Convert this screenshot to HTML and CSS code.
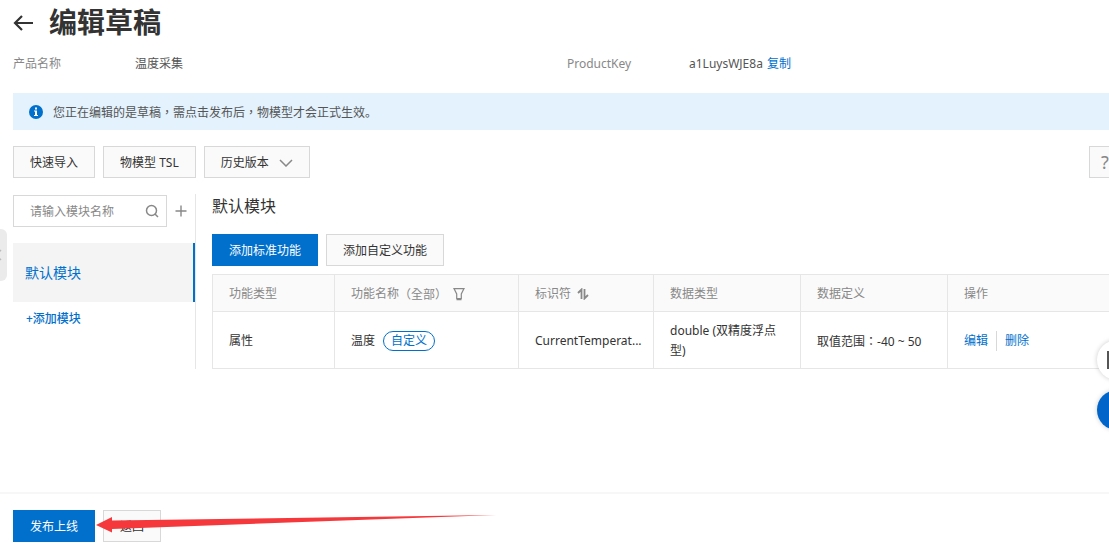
FILE: index.html
```html
<!DOCTYPE html>
<html lang="zh-CN">
<head>
<meta charset="utf-8">
<title>编辑草稿</title>
<link rel="stylesheet" href="styles.css">
</head>
<body>
<div class="app">
  <main class="content">
    <header class="page-head">
      <button class="icon-btn" type="button" aria-label="返回上一页">
        <svg width="22" height="18" viewBox="0 0 22 18" fill="none" stroke="#333" stroke-width="2.200"><path d="M20 10H2M9 3L2 10l7 7"/></svg>
      </button>
      <h1 class="page-title">编辑草稿</h1>
    </header>

    <dl class="facts">
      <div class="fact"><dt>产品名称</dt><dd>温度采集</dd></div>
      <div class="fact"><dt>ProductKey</dt><dd>a1LuysWJE8a<a class="link copy" href="#copy">复制</a></dd></div>
    </dl>

    <div class="notice" role="status">
      <svg width="14" height="14" viewBox="0 0 14 14"><circle cx="7" cy="7" r="7" fill="#0070cc"/><path d="M6 2.500h2v2H6zM5 5.500h3v4.500h1v1H5v-1h1V6.500H5z" fill="#fff"/></svg>
      <span>您正在编辑的是草稿<span class="trad" lang="zh-Hant">，</span>需点击发布后<span class="trad" lang="zh-Hant">，</span>物模型才会正式生效。</span>
    </div>

    <div class="toolbar">
      <button class="btn" type="button">快速导入</button>
      <button class="btn" type="button">物模型 TSL</button>
      <button class="btn" type="button">历史版本
        <svg class="chevron" width="14" height="8" viewBox="0 0 14 8" fill="none" stroke="#888" stroke-width="1.500"><path d="M1 1l6 6 6-6"/></svg>
      </button>
      <button class="btn help" type="button" aria-label="帮助">?</button>
    </div>

    <div class="workspace">
      <aside class="modules">
        <div class="search-row">
          <div class="search">
            <input class="search-input" type="text" aria-label="请输入模块名称" placeholder="请输入模块名称">
            <svg width="14" height="14" viewBox="0 0 14 14" fill="none" stroke="#888" stroke-width="1.500"><circle cx="6.500" cy="6.500" r="5"/><path d="M10 10l3 3"/></svg>
          </div>
          <button class="icon-btn" type="button" aria-label="新增">
            <svg width="12" height="12" viewBox="0 0 12 12" fill="none" stroke="#888" stroke-width="1.400"><path d="M6 .5v11M.5 6h11"/></svg>
          </button>
        </div>
        <button class="module active" type="button">默认模块</button>
        <button class="add-module" type="button">+添加模块</button>
      </aside>

      <section class="detail">
        <h2 class="section-title">默认模块</h2>
        <div class="actions">
          <button class="btn primary" type="button">添加标准功能</button>
          <button class="btn" type="button">添加自定义功能</button>
        </div>
        <table class="features">
          <colgroup><col class="c-type"><col class="c-name"><col class="c-id"><col class="c-data"><col class="c-data"><col></colgroup>
          <thead>
            <tr>
              <th>功能类型</th>
              <th><span class="th-label">功能名称<span class="trad" lang="zh-Hant">（全部）</span>
                <svg width="12" height="14" viewBox="0 0 12 14" fill="none" stroke="#888" stroke-width="1.200"><path d="M1 1.600h10L8.300 7v4.500H3.700V7zM3.500 12.600h5"/></svg></span></th>
              <th><span class="th-label">标识符
                <svg width="12" height="12" viewBox="0 0 12 12" fill="none" stroke="#888" stroke-width="1.800"><path d="M4.500 11V1.500L1 5M7.500 1v9.500L11 7"/></svg></span></th>
              <th>数据类型</th>
              <th>数据定义</th>
              <th>操作</th>
            </tr>
          </thead>
          <tbody>
            <tr>
              <td>属性</td>
              <td>温度<span class="tag">自定义</span></td>
              <td class="identifier">CurrentTemperat...</td>
              <td>double (双精度浮点型)</td>
              <td>取值范围<span class="trad" lang="zh-Hant">：</span>-40 ~ 50</td>
              <td><span class="row-links"><a class="link" href="#edit">编辑</a><a class="link" href="#delete">删除</a></span></td>
            </tr>
          </tbody>
        </table>
      </section>
    </div>
  </main>

  <footer class="footer">
    <button class="btn primary" type="button">发布上线</button>
    <button class="btn" type="button">返回</button>
    <svg class="pointer" width="400" height="18" viewBox="0 0 400 18" fill="#f5383b"><path d="M0 10L16 2v3.500L400 0 16 14v3.500z"/></svg>
  </footer>

  <button class="collapse" type="button" aria-label="展开菜单">
    <svg width="6" height="12" viewBox="0 0 6 12" fill="none" stroke="#bbb" stroke-width="1.500"><path d="M1 1L-4 6l5 5"/></svg>
  </button>
  <div class="floaters">
    <button class="float" type="button" aria-label="文档">
      <svg width="16" height="18" viewBox="0 0 16 18" fill="none" stroke="#555" stroke-width="2"><path d="M1 1h14v16H1z"/></svg>
    </button>
    <button class="float solid" type="button" aria-label="咨询"></button>
  </div>
</div>
</body>
</html>
```
FILE: styles.css
```css
* { box-sizing: border-box; }

body {
  margin: 0;
  background: #fff;
  color: #333;
  font: 12px/20px "Noto Sans", "Noto Sans CJK SC", sans-serif;
}

button, input { font: inherit; color: inherit; }
button { cursor: pointer; }
svg { display: block; flex: none; }

.app {
  position: relative;
  display: flex;
  flex-direction: column;
  min-height: 100vh;
  overflow: hidden;
}

.content { flex: 1; margin-right: -12px; padding-left: 13px; }

.icon-btn { padding: 0; border: 0; background: none; }

.page-head {
  display: flex;
  align-items: center;
  gap: 14px;
  height: 44px;
}
.page-title { margin: 0; font-size: 28px; line-height: 40px; }

.facts {
  display: grid;
  grid-template-columns: 1fr 1fr;
  margin: 10px 0 19px;
}
.fact { display: flex; }
.fact dt { width: 122px; color: #888; }
.fact dd { margin: 0; color: #555; }
.copy { margin-left: 4px; }

.link { color: #0070cc; text-decoration: none; }

.notice {
  display: flex;
  align-items: center;
  gap: 10px;
  height: 37px;
  padding: 1px 0 0 16px;
  background: #e3f2fd;
  color: #555;
}

.toolbar, .actions { display: flex; gap: 8px; }
.toolbar { margin-top: 16px; }

.btn {
  display: inline-flex;
  align-items: center;
  justify-content: center;
  height: 32px;
  padding: 2px 16px 0;
  border: 1px solid #d8d8d8;
  background: #fafafa;
  white-space: nowrap;
}
.btn.primary { border-color: #0070cc; background: #0070cc; color: #fff; }
.chevron { margin-left: 10px; }
.help {
  width: 32px;
  margin-left: auto;
  padding: 0;
  color: #888;
  font-size: 18px;
}

.workspace { display: flex; margin-top: 16px; }

.modules {
  display: flex;
  flex-direction: column;
  flex: none;
  width: 183px;
  padding-top: 1px;
  border-right: 1px solid #e6e6e6;
}
.search-row { display: flex; align-items: center; gap: 8px; }
.search {
  display: flex;
  align-items: center;
  width: 154px;
  height: 32px;
  padding: 0 7px 0 16px;
  border: 1px solid #d8d8d8;
}
.search-input {
  flex: 1;
  min-width: 0;
  padding: 1px 0 0;
  border: 0;
  outline: 0;
  background: none;
}
.search-input::placeholder { color: #888; opacity: 1; }

.module {
  height: 59px;
  margin-top: 16px;
  padding: 0 12px;
  border: 0;
  border-right: 2px solid #0070cc;
  background: #f4f4f4;
  color: #0070cc;
  font-size: 14px;
  text-align: left;
}
.add-module {
  align-self: flex-start;
  margin-top: 7px;
  padding: 0 13px;
  border: 0;
  background: none;
  color: #0070cc;
  font-weight: 500;
}

.detail { flex: 1; min-width: 0; padding-left: 16px; }
.section-title {
  margin: 0 0 16px;
  font-size: 16px;
  font-weight: 400;
  line-height: 24px;
}

.features {
  width: 100%;
  margin-top: 8px;
  border-collapse: collapse;
  table-layout: fixed;
}
.c-type { width: 122px; }
.c-name { width: 184px; }
.c-id { width: 135px; }
.c-data { width: 147px; }
.features th, .features td {
  padding: 9px 16px 7px;
  border: 1px solid #e6e6e6;
  text-align: left;
}
.features th { background: #fafafa; color: #888; font-weight: 400; }
.features .identifier { padding-right: 8px; white-space: nowrap; }
.th-label { display: flex; align-items: center; gap: 6px; }
.th-label .trad { margin-left: -6px; }
.trad { font-family: "Noto Sans CJK TC", sans-serif; }

.tag {
  display: inline-block;
  margin-left: 8px;
  padding: 0 7px;
  border: 1px solid #0070cc;
  border-radius: 10px;
  color: #0070cc;
  line-height: 18px;
}
.row-links { display: flex; }
.row-links .link + .link {
  margin-left: 8px;
  padding-left: 8px;
  border-left: 1px solid #d8d8d8;
}

.footer {
  position: relative;
  display: flex;
  gap: 8px;
  padding: 16px 13px 12px;
  border-top: 2px solid #f7f7f7;
}
.pointer { position: absolute; left: 96px; top: 21px; }

.collapse {
  position: absolute;
  left: 0;
  top: 229px;
  width: 7px;
  height: 52px;
  padding: 0;
  border: 0;
  border-radius: 0 6px 6px 0;
  background: #ebebeb;
}

.floaters {
  position: absolute;
  right: -28px;
  top: 340px;
  display: flex;
  flex-direction: column;
  gap: 10px;
}
.float {
  display: flex;
  align-items: center;
  width: 40px;
  height: 40px;
  padding: 0 10px;
  border: 0;
  border-radius: 50%;
  background: #fff;
  box-shadow: 0 0 5px rgba(0, 0, 0, 0.2);
}
.float.solid { background: #0064c8; }
```
